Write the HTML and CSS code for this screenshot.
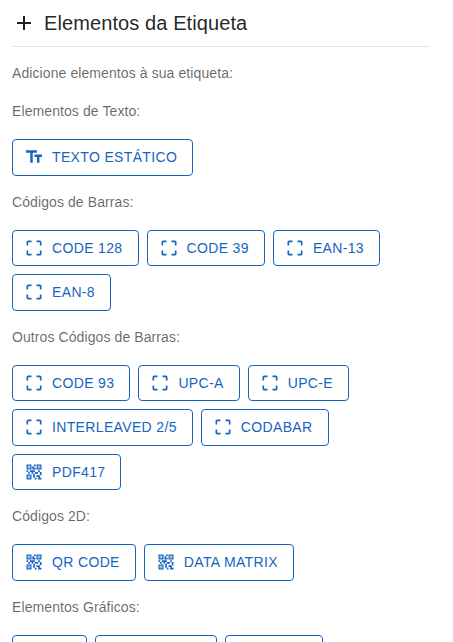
FILE: index.html
```html
<!DOCTYPE html>
<html lang="pt">
<head>
<meta charset="utf-8">
<title>Elementos da Etiqueta</title>
<link rel="stylesheet" href="styles.css">
</head>
<body>
<svg class="defs" width="0" height="0" aria-hidden="true">
  <symbol id="i-text" viewBox="0 0 24 24"><path d="M2.5 4v3h5v12h3V7h5V4H2.5zm19 5h-9v3h3v7h3v-7h3V9z"/></symbol>
  <symbol id="i-bar" viewBox="0 0 24 24"><path d="M3 5v4h2V5h4V3H5c-1.1 0-2 .9-2 2zm2 10H3v4c0 1.1.9 2 2 2h4v-2H5v-4zm14 4h-4v2h4c1.1 0 2-.9 2-2v-4h-2v4zm0-16h-4v2h4v4h2V5c0-1.1-.9-2-2-2z"/></symbol>
  <symbol id="i-qr" viewBox="0 0 24 24"><path d="M15 21h-2v-2h2v2zm-2-7h-2v5h2v-5zm8-2h-2v4h2v-4zm-2-2h-2v2h2v-2zM7 12H5v2h2v-2zm-2-2H3v2h2v-2zm7-5h2V3h-2v2zm-7.5-.5v3h3v-3h-3zM9 9H3V3h6v6zm-4.5 10.5v-3h3v3h-3zM3 21h6v-6H3v6zm13.5-16.5v3h3v-3h-3zM15 9V3h6v6h-6zm4 10v-3h-4v2h2v3h4v-2h-2zm-2-7h-4v2h4v-2zm-4-2H7v2h2v2h2v-2h2v-2zm1-1V7h-2V5h-2v4h4zM6.75 5.25h-1.5v1.5h1.5v-1.5zm0 12h-1.5v1.5h1.5v-1.5zm12-12h-1.5v1.5h1.5v-1.5z"/></symbol>
</svg>
<main class="panel">
  <header class="head">
    <svg class="head-icon" viewBox="0 0 24 24"><path d="M19 13h-6v6h-2v-6H5v-2h6V5h2v6h6v2z"/></svg>
    <h1 class="title">Elementos da Etiqueta</h1>
  </header>
  <hr class="rule">
  <p class="label intro">Adicione elementos à sua etiqueta:</p>

  <p class="label">Elementos de Texto:</p>
  <div class="group">
    <button class="btn"><svg class="ico"><use href="#i-text"/></svg>Texto Estático</button>
  </div>

  <p class="label">Códigos de Barras:</p>
  <div class="group">
    <button class="btn"><svg class="ico"><use href="#i-bar"/></svg>Code 128</button>
    <button class="btn"><svg class="ico"><use href="#i-bar"/></svg>Code 39</button>
    <button class="btn"><svg class="ico"><use href="#i-bar"/></svg>EAN-13</button>
    <button class="btn"><svg class="ico"><use href="#i-bar"/></svg>EAN-8</button>
  </div>

  <p class="label">Outros Códigos de Barras:</p>
  <div class="group">
    <button class="btn"><svg class="ico"><use href="#i-bar"/></svg>Code 93</button>
    <button class="btn"><svg class="ico"><use href="#i-bar"/></svg>UPC-A</button>
    <button class="btn"><svg class="ico"><use href="#i-bar"/></svg>UPC-E</button>
    <button class="btn"><svg class="ico"><use href="#i-bar"/></svg>Interleaved 2/5</button>
    <button class="btn"><svg class="ico"><use href="#i-bar"/></svg>Codabar</button>
    <button class="btn"><svg class="ico"><use href="#i-qr"/></svg>PDF417</button>
  </div>

  <p class="label">Códigos 2D:</p>
  <div class="group">
    <button class="btn"><svg class="ico"><use href="#i-qr"/></svg>QR Code</button>
    <button class="btn"><svg class="ico"><use href="#i-qr"/></svg>Data Matrix</button>
  </div>

  <p class="label">Elementos Gráficos:</p>
  <div class="group">
    <button class="btn">Linha</button>
    <button class="btn">Retângulo</button>
    <button class="btn">Círculo</button>
  </div>
</main>
</body>
</html>
```
FILE: styles.css
```css
html, body {
  margin: 0;
  background: #fff;
  font-family: "Liberation Sans", Arial, sans-serif;
}
.defs { position: absolute; }
.panel {
  width: 417px;
  padding: 7px 0 16px 12px;
}
.head {
  display: flex;
  align-items: center;
  gap: 8px;
  height: 32px;
}
.head-icon {
  width: 24px;
  height: 24px;
  fill: rgba(0, 0, 0, 0.87);
}
.title {
  margin: 0;
  font-size: 20px;
  font-weight: 400;
  line-height: 32px;
  letter-spacing: 0.1px;
  color: rgba(0, 0, 0, 0.87);
}
.rule {
  margin: 7px 0 0;
  border: 0;
  border-top: 1px solid rgba(0, 0, 0, 0.12);
}
.label {
  margin: 0 0 17px;
  font-size: 14px;
  line-height: 21px;
  letter-spacing: 0.09px;
  color: rgba(0, 0, 0, 0.6);
}
.intro { margin-top: 16px; }
.group {
  display: flex;
  flex-wrap: wrap;
  gap: 8px;
  margin-bottom: 16px;
}
.btn {
  display: inline-flex;
  align-items: center;
  padding: 5px 15px;
  border: 1px solid #1565c0;
  border-radius: 4px;
  background: transparent;
  color: #1565c0;
  font: 500 14px/24.5px "Liberation Sans", Arial, sans-serif;
  letter-spacing: 0.35px;
  text-transform: uppercase;
}
.ico {
  width: 20px;
  height: 20px;
  margin: 0 8px 0 -4px;
  fill: currentColor;
}
```
